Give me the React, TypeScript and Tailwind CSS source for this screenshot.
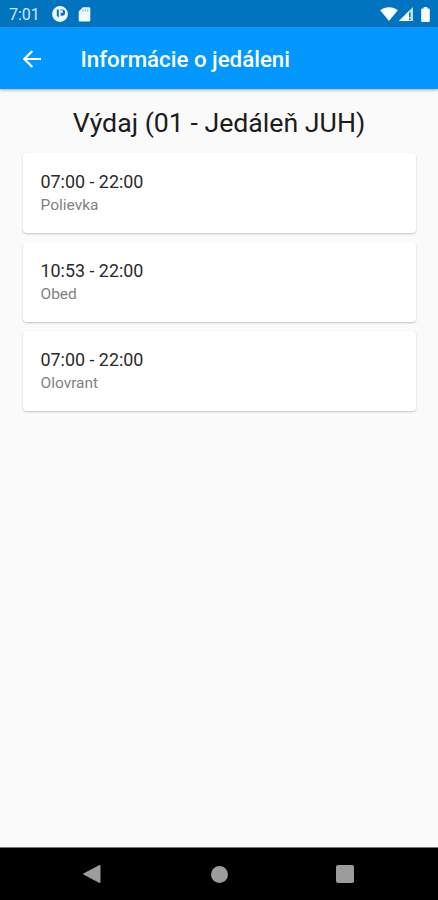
type Meal = { time: string; name: string };

const meals: Meal[] = [
  { time: '07:00 - 22:00', name: 'Polievka' },
  { time: '10:53 - 22:00', name: 'Obed' },
  { time: '07:00 - 22:00', name: 'Olovrant' },
];

function StatusBar() {
  return (
    <div className="flex h-[27px] items-center bg-[#0074bf] pt-px pl-[9px] pr-[8px] text-white">
      <span className="w-[42px] pt-px text-[16px] leading-none text-[#d3e9f8]">7:01</span>
      <svg className="ml-px size-4" viewBox="0 0 16 16">
        <circle cx="8" cy="8" r="7.9" fill="#f2f9fe" />
        <path d="M4.8 3.4h2v8.4l-2-2z" fill="#0074bf" />
        <path d="M8.6 3.4H10a3.2 3.2 0 0 1 0 6.4H8.6z" fill="#0074bf" />
        <path d="M8.6 4.4h2.2v2.4H8.6z" fill="#f2f9fe" />
      </svg>
      <svg className="ml-[10px] h-[15px] w-[13px]" viewBox="0 0 13 15">
        <path d="M4.8 .3H11a1.3 1.3 0 0 1 1.3 1.3v11.6a1.3 1.3 0 0 1-1.3 1.3H2a1.3 1.3 0 0 1-1.3-1.3V4.5z" fill="#f2f9fe" />
        <path d="M5 2.2v2.6M7.4 2.2v2.6M9.8 2.2v2.6" stroke="#7db8e0" strokeWidth="1" />
      </svg>
      <div className="ml-auto flex items-center">
        <svg className="h-[14px] w-[18px]" viewBox="0 0 18 14">
          <path d="M0.2 3.2C5 -.7 13 -.7 17.8 3.2L9 14z" fill="#fff" />
        </svg>
        <svg className="ml-px h-[14px] w-[14px]" viewBox="0 0 14 14">
          <path d="M0 14 14 0v14z" fill="#c5e0f3" />
          <path d="M0 14 10 4v10z" fill="#f4faff" />
          <path d="M10.8 5.5v4.7M10.8 11.6V13" stroke="#0074bf" strokeWidth="1.5" />
        </svg>
        <svg className="ml-[8px] h-[15px] w-[9px]" viewBox="0 0 9 15">
          <path d="M2.7 0h3.6v1.5h1.5a1 1 0 0 1 1 1V14a1 1 0 0 1-1 1H1.2a1 1 0 0 1-1-1V2.5a1 1 0 0 1 1-1h1.5z" fill="#fff" />
        </svg>
      </div>
    </div>
  );
}

function AppBar() {
  return (
    <header className="flex h-[62px] items-center bg-[#0398ff] pt-px pl-[23px] text-white shadow-[0_1px_3px_rgba(0,0,0,0.35)]">
      <svg className="size-[18px]" viewBox="0 0 18 18" fill="none" stroke="#fff" strokeWidth="2.2">
        <path d="M18 9H1.5M9.3 1 1.4 9l7.9 8" />
      </svg>
      <h1 className="ml-[39.5px] pt-px text-[22.3px] font-medium leading-none">Informácie o jedáleni</h1>
    </header>
  );
}

function MealCard({ meal }: { meal: Meal }) {
  return (
    <div className="h-20 rounded-[4px] bg-white pt-[18px] pl-[17.5px] shadow-[0_1px_2px_rgba(0,0,0,0.22)]">
      <div className="text-[17.9px] leading-[22px] text-[#2b2b2b]">{meal.time}</div>
      <div className="mt-px text-[15.5px] leading-[22px] text-[#828282]">{meal.name}</div>
    </div>
  );
}

function NavBar() {
  return (
    <nav className="flex h-[53px] items-center border-t border-[#777] bg-black pl-[83px] text-[#9c9c9c]">
      <svg className="h-[18px] w-[18px]" viewBox="0 0 18 18" fill="currentColor">
        <path d="M.8 8.3 16 .2q1.5-.5 1.5 1v15.6q0 1.5-1.5 1L.8 9.7q-1-.7 0-1.4z" />
      </svg>
      <span className="ml-[110px] size-[17px] rounded-full bg-[#9c9c9c]" />
      <span className="ml-[108px] size-[18px] rounded-[2px] bg-[#9c9c9c]" />
    </nav>
  );
}

export default function App() {
  return (
    <div className="flex h-[900px] w-[438px] flex-col overflow-hidden bg-[#fafafa] font-[Roboto,sans-serif]">
      <StatusBar />
      <AppBar />
      <main className="flex-1 pt-[18px]">
        <h2 className="text-center text-[26.7px] leading-8 text-[#1c1c1c]">Výdaj (01 - Jedáleň JUH)</h2>
        <div className="mt-[13.5px] flex flex-col gap-[9px] pr-[22px] pl-[23px]">
          {meals.map((meal) => (
            <MealCard key={meal.name} meal={meal} />
          ))}
        </div>
      </main>
      <NavBar />
    </div>
  );
}
